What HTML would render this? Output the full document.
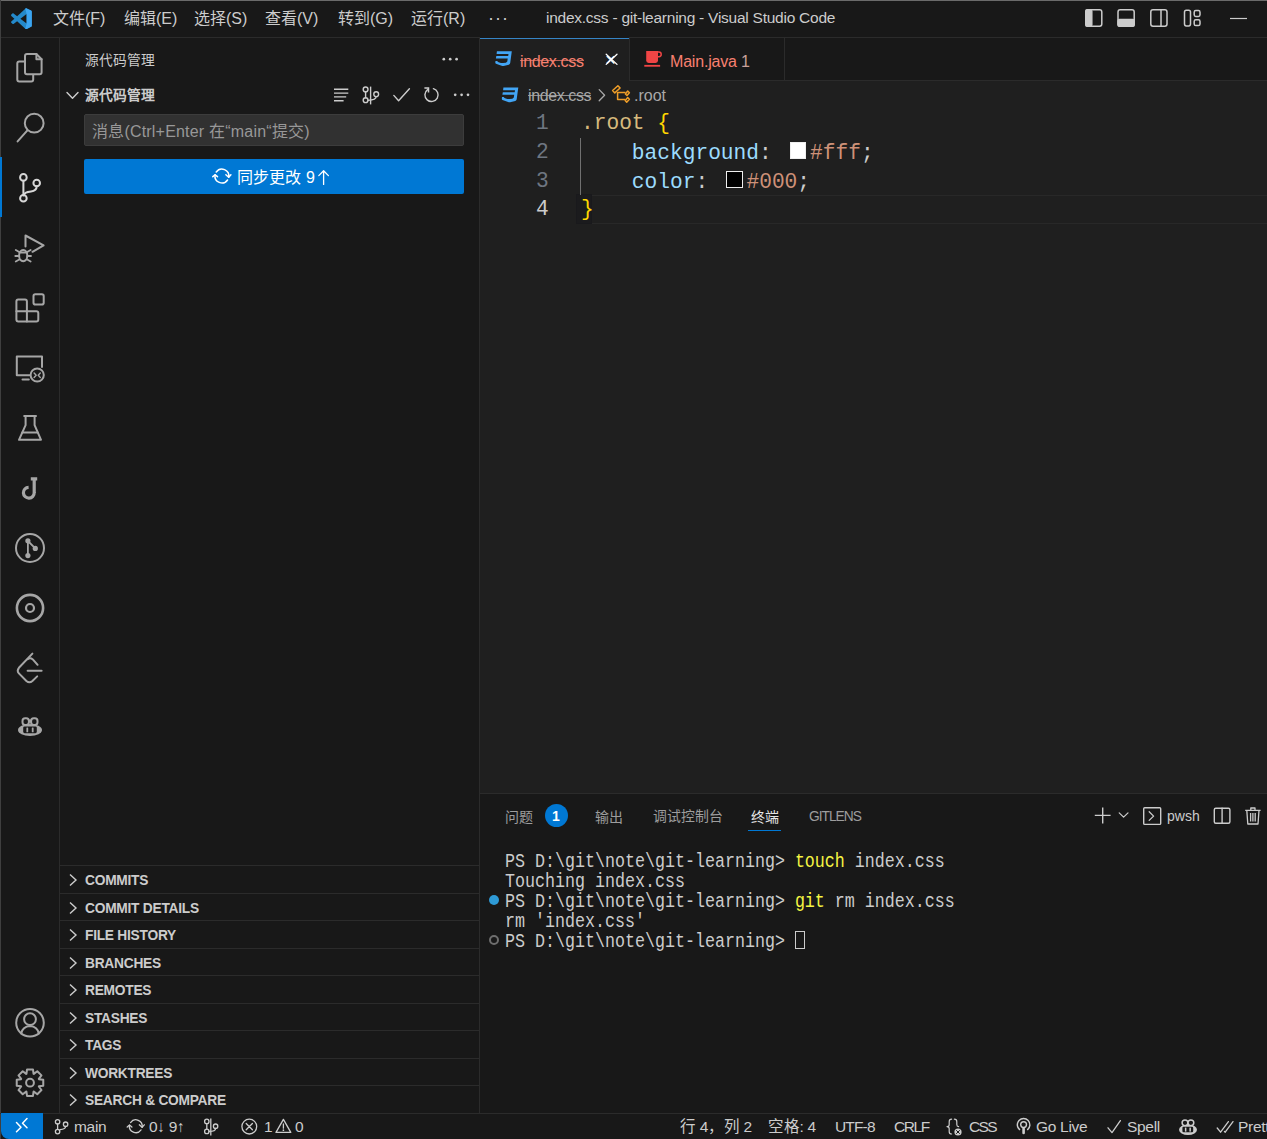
<!DOCTYPE html>
<html lang="zh-CN"><head><meta charset="utf-8">
<style>
*{margin:0;padding:0;box-sizing:border-box}
html,body{width:1267px;height:1139px;overflow:hidden;background:#181818}
body{position:relative;font-family:"Liberation Sans",sans-serif;color:#cccccc}
.a{position:absolute}
.t{position:absolute;white-space:nowrap;line-height:1}
.mono{font-family:"Liberation Mono",monospace}
#term .t{transform:scaleY(1.17);transform-origin:0 0}
svg{position:absolute;overflow:visible}
</style></head><body>

<!-- window edges -->
<div class="a" style="left:0;top:0;width:1267px;height:1px;background:#6a6a6a"></div>
<div class="a" style="left:0;top:0;width:1px;height:1139px;background:#3f3f3f"></div>

<!-- TITLE BAR -->
<div class="a" style="left:1px;top:1px;width:1266px;height:36px;background:#181818"></div>
<div class="a" style="left:1px;top:37px;width:479px;height:1px;background:#2b2b2b"></div>
<div class="a" style="left:629px;top:37px;width:638px;height:1px;background:#2b2b2b"></div>
<div class="a" id="menu" style="left:0;top:0;width:1267px;height:37px;font-size:16px;color:#cccccc">
  <span class="t" style="left:53px;top:11px">文件(F)</span>
  <span class="t" style="left:124px;top:11px">编辑(E)</span>
  <span class="t" style="left:194px;top:11px">选择(S)</span>
  <span class="t" style="left:265px;top:11px">查看(V)</span>
  <span class="t" style="left:338px;top:11px">转到(G)</span>
  <span class="t" style="left:411px;top:11px">运行(R)</span>
  <span class="t" style="left:488px;top:9px;font-size:18px;letter-spacing:1px">···</span>
  <span class="t" style="left:546px;top:10px;font-size:15.5px;letter-spacing:-0.25px">index.css - git-learning - Visual Studio Code</span>
</div>

<!-- ACTIVITY BAR -->
<div class="a" style="left:59px;top:38px;width:1px;height:1075px;background:#2b2b2b"></div>
<div class="a" style="left:0;top:157px;width:2px;height:60px;background:#0078d4"></div>

<!-- SIDEBAR -->
<div class="a" style="left:479px;top:38px;width:1px;height:1075px;background:#2b2b2b"></div>
<span class="t" style="left:85px;top:54px;font-size:13.75px">源代码管理</span>
<span class="t" style="left:85px;top:89px;font-size:13.75px;font-weight:bold">源代码管理</span>
<div class="a" style="left:84px;top:114px;width:380px;height:32px;background:#313131;border:1px solid #3c3c3c;border-radius:2px"></div>
<span class="t" style="left:92px;top:124px;font-size:16px;color:#989898;letter-spacing:0.2px">消息(Ctrl+Enter 在“main“提交)</span>
<div class="a" style="left:84px;top:159px;width:380px;height:35px;background:#0078d4;border-radius:2px"></div>
<span class="t" style="left:237px;top:170px;font-size:16px;color:#ffffff">同步更改</span><span class="t" style="left:306px;top:170px;font-size:16px;color:#ffffff">9</span>

<!-- section headers -->
<div id="sections">
<div class="a" style="left:60px;top:865px;width:419px;height:1px;background:#2b2b2b"></div>
<svg style="left:68px;top:873px" width="10" height="14" viewBox="0 0 10 14"><path d="M2 1.5 L8 7 L2 12.5" fill="none" stroke="#cccccc" stroke-width="1.4"/></svg>
<span class="t" style="left:85px;top:874px;font-size:13.75px;font-weight:bold;color:#cccccc;letter-spacing:-0.25px">COMMITS</span>
<div class="a" style="left:60px;top:893px;width:419px;height:1px;background:#2b2b2b"></div>
<svg style="left:68px;top:901px" width="10" height="14" viewBox="0 0 10 14"><path d="M2 1.5 L8 7 L2 12.5" fill="none" stroke="#cccccc" stroke-width="1.4"/></svg>
<span class="t" style="left:85px;top:902px;font-size:13.75px;font-weight:bold;color:#cccccc;letter-spacing:-0.25px">COMMIT DETAILS</span>
<div class="a" style="left:60px;top:920px;width:419px;height:1px;background:#2b2b2b"></div>
<svg style="left:68px;top:928px" width="10" height="14" viewBox="0 0 10 14"><path d="M2 1.5 L8 7 L2 12.5" fill="none" stroke="#cccccc" stroke-width="1.4"/></svg>
<span class="t" style="left:85px;top:929px;font-size:13.75px;font-weight:bold;color:#cccccc;letter-spacing:-0.25px">FILE HISTORY</span>
<div class="a" style="left:60px;top:948px;width:419px;height:1px;background:#2b2b2b"></div>
<svg style="left:68px;top:956px" width="10" height="14" viewBox="0 0 10 14"><path d="M2 1.5 L8 7 L2 12.5" fill="none" stroke="#cccccc" stroke-width="1.4"/></svg>
<span class="t" style="left:85px;top:957px;font-size:13.75px;font-weight:bold;color:#cccccc;letter-spacing:-0.25px">BRANCHES</span>
<div class="a" style="left:60px;top:975px;width:419px;height:1px;background:#2b2b2b"></div>
<svg style="left:68px;top:983px" width="10" height="14" viewBox="0 0 10 14"><path d="M2 1.5 L8 7 L2 12.5" fill="none" stroke="#cccccc" stroke-width="1.4"/></svg>
<span class="t" style="left:85px;top:984px;font-size:13.75px;font-weight:bold;color:#cccccc;letter-spacing:-0.25px">REMOTES</span>
<div class="a" style="left:60px;top:1003px;width:419px;height:1px;background:#2b2b2b"></div>
<svg style="left:68px;top:1011px" width="10" height="14" viewBox="0 0 10 14"><path d="M2 1.5 L8 7 L2 12.5" fill="none" stroke="#cccccc" stroke-width="1.4"/></svg>
<span class="t" style="left:85px;top:1012px;font-size:13.75px;font-weight:bold;color:#cccccc;letter-spacing:-0.25px">STASHES</span>
<div class="a" style="left:60px;top:1030px;width:419px;height:1px;background:#2b2b2b"></div>
<svg style="left:68px;top:1038px" width="10" height="14" viewBox="0 0 10 14"><path d="M2 1.5 L8 7 L2 12.5" fill="none" stroke="#cccccc" stroke-width="1.4"/></svg>
<span class="t" style="left:85px;top:1039px;font-size:13.75px;font-weight:bold;color:#cccccc;letter-spacing:-0.25px">TAGS</span>
<div class="a" style="left:60px;top:1058px;width:419px;height:1px;background:#2b2b2b"></div>
<svg style="left:68px;top:1066px" width="10" height="14" viewBox="0 0 10 14"><path d="M2 1.5 L8 7 L2 12.5" fill="none" stroke="#cccccc" stroke-width="1.4"/></svg>
<span class="t" style="left:85px;top:1067px;font-size:13.75px;font-weight:bold;color:#cccccc;letter-spacing:-0.25px">WORKTREES</span>
<div class="a" style="left:60px;top:1085px;width:419px;height:1px;background:#2b2b2b"></div>
<svg style="left:68px;top:1093px" width="10" height="14" viewBox="0 0 10 14"><path d="M2 1.5 L8 7 L2 12.5" fill="none" stroke="#cccccc" stroke-width="1.4"/></svg>
<span class="t" style="left:85px;top:1094px;font-size:13.75px;font-weight:bold;color:#cccccc;letter-spacing:-0.25px">SEARCH &amp; COMPARE</span>
</div>

<!-- EDITOR -->
<div class="a" style="left:480px;top:38px;width:787px;height:755px;background:#1f1f1f"></div>
<!-- tab bar -->
<div class="a" style="left:480px;top:38px;width:787px;height:43px;background:#181818"></div>
<div class="a" style="left:480px;top:80px;width:787px;height:1px;background:#2b2b2b"></div>
<div class="a" style="left:480px;top:38px;width:149px;height:43px;background:#1f1f1f;border-top:1px solid #3584c6"></div>
<div class="a" style="left:629px;top:38px;width:1px;height:43px;background:#2b2b2b"></div>
<div class="a" style="left:784px;top:38px;width:1px;height:43px;background:#2b2b2b"></div>
<span class="t" style="left:520px;top:53.5px;font-size:16px;color:#f88070;letter-spacing:-0.35px">index.css</span><div class="a" style="left:520px;top:60px;width:64px;height:1px;background:#f88070;opacity:0.7"></div>
<span class="t" style="left:605px;top:50px;font-size:19px;color:#ffffff">×</span>
<span class="t" style="left:670px;top:53.5px;font-size:16px;color:#f88070;letter-spacing:-0.2px">Main.java <span style="color:#c8a09a">1</span></span>
<!-- breadcrumbs -->
<span class="t" style="left:528px;top:88px;font-size:16px;color:#a9a9a9;letter-spacing:-0.4px">index.css</span><div class="a" style="left:528px;top:95px;width:63px;height:1px;background:#a9a9a9;opacity:0.8"></div>
<span class="t" style="left:634px;top:88px;font-size:16px;color:#a9a9a9">.root</span>

<!-- code -->
<div class="a" style="left:576px;top:195px;width:691px;height:29px;border-top:1px solid #282828;border-bottom:1px solid #282828"></div>
<div class="a" style="left:576px;top:194px;width:16px;height:30px;background:#1b1b1d;border:1px solid #19191c"></div>
<div class="a" style="left:580px;top:138px;width:1px;height:57px;background:#707070"></div>
<div id="code" class="mono" style="position:absolute;left:0;top:0;font-size:21.2px">
  <span class="t" style="left:536px;top:113px;color:#6e7681">1</span>
  <span class="t" style="left:536px;top:142px;color:#6e7681">2</span>
  <span class="t" style="left:536px;top:171px;color:#6e7681">3</span>
  <span class="t" style="left:536px;top:199px;color:#cccccc">4</span>
  <span class="t" style="left:581px;top:113px"><span style="color:#d7ba7d">.root</span> <span style="color:#ffd700">{</span></span>
  <span class="t" style="left:581px;top:142px;white-space:pre">    <span style="color:#9cdcfe">background</span><span style="color:#cccccc">: </span><span style="display:inline-block;width:16.5px;height:16.5px;margin:0 3.6px 0 5.5px;border:1.6px solid #eee;background:#fff;vertical-align:0px"></span><span style="color:#ce9178">#fff</span><span style="color:#cccccc">;</span></span>
  <span class="t" style="left:581px;top:171px;white-space:pre">    <span style="color:#9cdcfe">color</span><span style="color:#cccccc">: </span><span style="display:inline-block;width:16.5px;height:16.5px;margin:0 3.6px 0 5.5px;border:1.6px solid #eee;background:#000;vertical-align:0px"></span><span style="color:#ce9178">#000</span><span style="color:#cccccc">;</span></span>
  <span class="t" style="left:581px;top:199px;color:#ffd700">}</span>
</div>

<!-- PANEL -->
<div class="a" style="left:480px;top:793px;width:787px;height:1px;background:#2b2b2b"></div>
<div class="a" style="left:480px;top:794px;width:787px;height:318px;background:#181818"></div>
<span class="t" style="left:505px;top:810px;font-size:14px;color:#9d9d9d">问题</span>
<div class="a" style="left:545px;top:804px;width:23px;height:23px;border-radius:50%;background:#0078d4"></div>
<span class="t" style="left:552px;top:809px;font-size:14px;color:#fff;font-weight:bold">1</span>
<span class="t" style="left:595px;top:810px;font-size:14px;color:#9d9d9d">输出</span>
<span class="t" style="left:653px;top:810px;font-size:13.9px;color:#9d9d9d">调试控制台</span>
<span class="t" style="left:751px;top:810px;font-size:14px;color:#e7e7e7">终端</span>
<div class="a" style="left:748px;top:830px;width:33px;height:1px;background:#0078d4"></div>
<span class="t" style="left:809px;top:810px;font-size:13.75px;color:#9d9d9d;letter-spacing:-1px">GITLENS</span>
<span class="t" style="left:1167px;top:809px;font-size:14px;color:#cccccc">pwsh</span>

<div id="term" class="mono" style="position:absolute;left:0;top:0;font-size:16.67px;color:#cccccc">
  <span class="t" style="left:505px;top:852.5px">PS D:\git\note\git-learning&gt; <span style="color:#f5f543">touch</span> index.css</span>
  <span class="t" style="left:505px;top:872.5px">Touching index.css</span>
  <span class="t" style="left:505px;top:892.5px">PS D:\git\note\git-learning&gt; <span style="color:#f5f543">git</span> rm index.css</span>
  <span class="t" style="left:505px;top:912.5px">rm 'index.css'</span>
  <span class="t" style="left:505px;top:932.5px">PS D:\git\note\git-learning&gt; </span>
</div>
<div class="a" style="left:795px;top:931px;width:10px;height:18px;border:1px solid #cccccc"></div>
<div class="a" style="left:488.5px;top:894.8px;width:10px;height:10px;border-radius:50%;background:#2e9ad6"></div>
<div class="a" style="left:488.5px;top:934.8px;width:10px;height:10px;border-radius:50%;border:2px solid #6e6e6e"></div>

<!-- STATUS BAR -->
<div class="a" style="left:0;top:1113px;width:1267px;height:1px;background:#2b2b2b"></div>
<div class="a" style="left:1px;top:1113px;width:42px;height:26px;background:#0078d4;border-bottom-left-radius:8px"></div>
<div id="status" style="position:absolute;left:0;top:0;font-size:15.5px;color:#cccccc;letter-spacing:-0.3px">
  <span class="t" style="left:74px;top:1119px">main</span>
  <span class="t" style="left:149px;top:1119px">0↓ 9↑</span>
  <span class="t" style="left:264px;top:1119px">1</span>
  <span class="t" style="left:295px;top:1119px">0</span>
  <span class="t" style="left:680px;top:1119px">行 4，列 2</span>
  <span class="t" style="left:768px;top:1119px">空格: 4</span>
  <span class="t" style="left:835px;top:1119px;letter-spacing:-0.85px">UTF-8</span>
  <span class="t" style="left:894px;top:1119px;letter-spacing:-1.4px">CRLF</span>
  <span class="t" style="left:969px;top:1119px;letter-spacing:-1.6px">CSS</span>
  <span class="t" style="left:1036px;top:1119px">Go Live</span>
  <span class="t" style="left:1127px;top:1119px">Spell</span>
  <span class="t" style="left:1238px;top:1119px">Prettier</span>
</div>


<!-- ICON OVERLAY -->
<svg style="left:0;top:0" width="1267" height="1139" viewBox="0 0 1267 1139">
<g fill="none" stroke-linecap="round" stroke-linejoin="round">
<!-- VS Code logo -->
<g transform="translate(11,8.3) scale(0.208)">
<path fill="#2489ca" fill-rule="evenodd" d="M96.5 10.8 L75.9 0.9 C73.5 -0.3 70.7 0.2 68.8 2.1 L29.4 38.1 L12.2 25.1 C10.6 23.9 8.4 24 6.9 25.3 L1.4 30.3 C-0.4 32 -0.4 34.8 1.4 36.5 L16.3 50 L1.4 63.5 C-0.4 65.2 -0.4 68 1.4 69.7 L6.9 74.7 C8.4 76 10.6 76.1 12.2 74.9 L29.4 61.9 L68.8 97.9 C70.7 99.8 73.5 100.3 75.9 99.1 L96.5 89.2 C98.7 88.1 100 85.9 100 83.5 V16.5 C100 14.1 98.6 11.9 96.5 10.8 Z M75 27.3 L45.1 50 L75 72.7 Z"/>
<path fill="#3fa9f5" opacity="0.9" d="M96.5 10.8 L75.9 0.9 C73.5 -0.3 70.7 0.2 68.8 2.1 L75 27.3 V72.7 L68.8 97.9 C70.7 99.8 73.5 100.3 75.9 99.1 L96.5 89.2 C98.7 88.1 100 85.9 100 83.5 V16.5 C100 14.1 98.6 11.9 96.5 10.8 Z"/>
</g>

<!-- title bar right icons -->
<g stroke="#cccccc" stroke-width="1.5">
  <rect x="1085.8" y="9.8" width="16" height="16.4" rx="2.2"/>
  <rect x="1085.8" y="9.8" width="6" height="16.4" rx="1.5" fill="#cccccc"/>
  <rect x="1118" y="9.8" width="16.2" height="16.4" rx="2.2"/>
  <rect x="1118" y="19.5" width="16.2" height="6.7" rx="1.5" fill="#cccccc"/>
  <rect x="1150.8" y="9.8" width="16.2" height="16.4" rx="2.2"/>
  <line x1="1161" y1="10" x2="1161" y2="26"/>
  <rect x="1184.5" y="10.3" width="6" height="15.6" rx="1.8"/>
  <rect x="1194.2" y="10.6" width="5.8" height="5.8" rx="1.6"/>
  <rect x="1194.2" y="19.8" width="5.8" height="5.8" rx="1.6"/>
</g>
<line x1="1230" y1="18.5" x2="1247" y2="18.5" stroke="#cccccc" stroke-width="1.2" stroke-linecap="butt"/>

<!-- ACTIVITY BAR ICONS -->
<g stroke="#a6a6a6" stroke-width="2">
  <!-- files -->
  <path d="M24.5,61.4 H19.3 Q17.3,61.4 17.3,63.4 V79.5 Q17.3,81.5 19.3,81.5 H31.2 Q33.2,81.5 33.2,79.5 V75.2"/>
  <path d="M27,54 H36.4 L41.6,59.2 V72.2 Q41.6,74.2 39.6,74.2 H27 Q25,74.2 25,72.2 V56 Q25,54 27,54 Z"/>
  <path d="M36.4,54 V59.2 H41.6"/>
  <!-- search -->
  <circle cx="34.2" cy="123.2" r="9.4"/>
  <line x1="17.6" y1="141.4" x2="27.4" y2="130.4"/>
  <!-- run & debug -->
  <path d="M25.5,246.5 V235.5 L43.6,245.4 L32.5,251.8"/>
  <ellipse cx="23.2" cy="255.6" rx="4.1" ry="5.6"/>
  <path d="M19.5,252.5 H27 M15.8,250 L19.2,252 M30.6,250 L27.2,252 M15.3,256 H19 M31,256 H27.4 M15.8,261.5 L19.3,259.5 M30.6,261.5 L27.2,259.5" stroke-width="1.8"/>
  <!-- extensions -->
  <rect x="33.5" y="294.2" width="10.2" height="10.3" rx="1.8"/>
  <path d="M18.2,299.5 H25 Q26.9,299.5 26.9,301.4 V311.3 H36.4 Q38.3,311.3 38.3,313.2 V319.5 Q38.3,321.4 36.4,321.4 H18.3 Q16.4,321.4 16.4,319.5 V301.4 Q16.4,299.5 18.2,299.5 Z"/>
  <path d="M16.4,311.3 H26.9 V321.4"/>
  <!-- remote explorer -->
  <path d="M29.5,375.2 H16.8 V356.5 H42 V367"/>
  <line x1="22.5" y1="379.6" x2="28.8" y2="379.6"/>
  <circle cx="37.2" cy="375" r="6.6"/>
  <path d="M34.1,373.1 L36.2,375.3 L34.1,377.5 M40.3,373.1 L38.2,375.3 L40.3,377.5" stroke-width="1.4"/>
  <!-- testing flask -->
  <path d="M24.2,416 H36"/>
  <path d="M25.6,416.5 V425.2 L19,439.8 H41 L34.6,425.2 V416.5"/>
  <line x1="22.3" y1="432.6" x2="37.7" y2="432.6"/>
  <!-- J -->
  <path d="M30.8,478.8 H37.2 M34.2,479 V492.4 A5.4,5.4 0 1 1 28.6,487.3" stroke-width="3.2" stroke-linecap="butt"/>
  <!-- gitlens -->
  <circle cx="30" cy="548" r="14"/>
  <path d="M27.9,541 V555.5 M27.9,541 L35.3,548.4" stroke-width="1.8"/>
  <circle cx="27.9" cy="540.8" r="2.6" fill="#a6a6a6" stroke="none"/>
  <circle cx="27.9" cy="555.6" r="2.6" fill="#a6a6a6" stroke="none"/>
  <circle cx="35.3" cy="548.4" r="2.6" fill="#a6a6a6" stroke="none"/>
  <!-- circle dot -->
  <circle cx="30" cy="608" r="13.1" stroke-width="2.6"/>
  <circle cx="30" cy="608" r="4" stroke-width="2.2"/>
  <!-- leetcode -->
  <path d="M32.4,653.6 L18.9,667.8 Q16.6,670.6 18.9,673.4 L26.4,681 Q29.4,683.6 32.4,681 L37.2,676.4"/>
  <path d="M27.6,659.2 Q30.2,657.2 32.8,659.4 L37.6,664.8"/>
  <line x1="27.6" y1="670.8" x2="41.6" y2="670.8"/>
  <!-- account -->
  <circle cx="30" cy="1022.7" r="13.8"/>
  <circle cx="30" cy="1019.2" r="5.9"/>
  <path d="M21.2,1033.6 Q22.5,1026.5 30,1026 Q37.5,1026.5 38.8,1033.6"/>
</g>
<!-- copilot -->
<ellipse cx="30" cy="730" rx="12" ry="5.9" fill="#a6a6a6"/>
<rect x="22.5" y="718.3" width="6.4" height="6.6" rx="2.6" fill="#181818" stroke="#a6a6a6" stroke-width="2"/>
<rect x="31.1" y="718.3" width="6.4" height="6.6" rx="2.6" fill="#181818" stroke="#a6a6a6" stroke-width="2"/>
<rect x="28.6" y="719.6" width="2.8" height="3" fill="#a6a6a6"/>
<rect x="23.2" y="726.4" width="13.6" height="6.8" rx="1.4" fill="#181818"/>
<rect x="26.4" y="727.6" width="1.8" height="4.6" rx="0.5" fill="#a6a6a6"/>
<rect x="31.8" y="727.6" width="1.8" height="4.6" rx="0.5" fill="#a6a6a6"/>
<!-- settings gear -->
<g transform="translate(30,1082.7)" stroke="#a6a6a6" stroke-width="2" fill="none">
  <path d="M-3.56,-8.92 L-2.97,-13.27 L2.97,-13.27 L3.56,-8.92 L3.79,-8.82 L7.29,-11.48 L11.48,-7.29 L8.82,-3.79 L8.92,-3.56 L13.27,-2.97 L13.27,2.97 L8.92,3.56 L8.82,3.79 L11.48,7.29 L7.29,11.48 L3.79,8.82 L3.56,8.92 L2.97,13.27 L-2.97,13.27 L-3.56,8.92 L-3.79,8.82 L-7.29,11.48 L-11.48,7.29 L-8.82,3.79 L-8.92,3.56 L-13.27,2.97 L-13.27,-2.97 L-8.92,-3.56 L-8.82,-3.79 L-11.48,-7.29 L-7.29,-11.48 L-3.79,-8.82 Z"/>
  <circle cx="0" cy="0" r="3.9"/>
</g>
<!-- SCM active -->
<g stroke="#d7d7d7" stroke-width="2">
  <circle cx="23.4" cy="177.4" r="3.3"/>
  <circle cx="36.7" cy="183" r="3.3"/>
  <circle cx="23.4" cy="198.3" r="3.3"/>
  <line x1="23.4" y1="180.7" x2="23.4" y2="195"/>
  <path d="M36.7,186.3 Q36.7,190.8 31,191.4 Q24.2,192 23.6,195.5"/>
</g>
</g>
</svg>


<!-- ICON OVERLAY 2 -->
<svg style="left:0;top:0" width="1267" height="1139" viewBox="0 0 1267 1139">
<g fill="none" stroke-linecap="round" stroke-linejoin="round">
<!-- sidebar header dots -->
<g fill="#cccccc">
  <circle cx="443.8" cy="59.2" r="1.35"/><circle cx="450.2" cy="59.2" r="1.35"/><circle cx="456.6" cy="59.2" r="1.35"/>
  <circle cx="455.2" cy="94.8" r="1.35"/><circle cx="461.6" cy="94.8" r="1.35"/><circle cx="468" cy="94.8" r="1.35"/>
</g>
<!-- chevron down for section -->
<path d="M67,92.5 L72.5,98.2 L78,92.5" stroke="#cccccc" stroke-width="1.4"/>
<g stroke="#cccccc" stroke-width="1.4">
  <!-- list -->
  <path d="M334,89.2 H348.3 M334,93.1 H348.3 M334,96.9 H346.2 M334,100.7 H343.6" stroke-linecap="butt"/>
  <!-- graph -->
  <line x1="370.6" y1="86.6" x2="370.6" y2="104.4" stroke-linecap="butt"/>
  <circle cx="365.6" cy="89.4" r="2.4"/>
  <circle cx="365.6" cy="100.2" r="2.4"/>
  <circle cx="376.2" cy="94.2" r="2.4"/>
  <path d="M365.6,91.8 V97.8 M376.2,96.6 Q376.2,100 368,100.4"/>
  <!-- check -->
  <path d="M393.8,95.4 L398.6,100.8 L409.4,88.8"/>
  <!-- refresh -->
  <path d="M433.4,88.6 A6.6,6.6 0 1 1 427.6,89.6"/>
  <path d="M424.4,88.1 H428.5 V92.4" stroke-linecap="butt" stroke-linejoin="miter" stroke-width="1.5"/>
</g>
<!-- button sync icon -->
<g stroke="#ffffff" stroke-width="1.5" fill="none" stroke-linecap="round" stroke-linejoin="round"><path d="M216.25,172.04 A6.9,6.9 0 0 1 228.70,177.20"/><path d="M227.55,179.96 A6.9,6.9 0 0 1 215.10,174.80"/><path d="M225.90,174.70 L228.70,177.20 L230.90,174.70"/><path d="M212.80,176.70 L215.10,174.80 L217.50,176.70"/></g>
<path d="M323.6,171 V184.4 M318.8,175.6 L323.6,170.8 L328.4,175.6" stroke="#ffffff" stroke-width="1.3" fill="none"/>

<!-- TAB ICONS -->
<!-- css3 icon -->
<g id="cssicon" transform="translate(495,50.6)">
  <path fill="#42a5f5" d="M1.9,0.6 H16.8 L15.2,12.4 Q15,13.6 13.8,14.1 L8.6,15.4 Q8,15.6 7.3,15.4 L1,13.2 Q0.2,12.9 0.3,12 L0.5,10.3 L2.2,10.3 Q3.5,12.3 8,12.3 Q11.6,12.3 12.3,10.8 L12.7,8 H0.9 L1.3,5.5 H13.2 L13.5,3.5 H1.6 Z"/>
</g>
<g transform="translate(501.5,86.8)">
  <path fill="#42a5f5" d="M1.9,0.6 H16.8 L15.2,12.4 Q15,13.6 13.8,14.1 L8.6,15.4 Q8,15.6 7.3,15.4 L1,13.2 Q0.2,12.9 0.3,12 L0.5,10.3 L2.2,10.3 Q3.5,12.3 8,12.3 Q11.6,12.3 12.3,10.8 L12.7,8 H0.9 L1.3,5.5 H13.2 L13.5,3.5 H1.6 Z"/>
</g>
<!-- close -->
<path d="M606.2,54.2 L617,64.4 M617,54.2 L606.2,64.4" stroke="#ffffff" stroke-width="1.3"/>
<!-- java icon -->
<g fill="#f04545">
  <path d="M646.2,51.1 H658 V60.6 Q658,63 655.6,63 H648.6 Q646.2,63 646.2,60.6 Z"/>
  <rect x="644.3" y="64.9" width="15.8" height="1.8"/>
</g>
<path d="M657.4,51.9 H659 Q661.2,51.9 661.2,54.3 Q661.2,56.7 659,56.7 H657.4" fill="none" stroke="#f04545" stroke-width="1.5"/>
<!-- breadcrumb chevron -->
<path d="M599.2,89.6 L604.6,95.2 L599.2,100.8" stroke="#a9a9a9" stroke-width="1.3"/>
<!-- symbol class icon -->
<g stroke="#ee9d28" stroke-width="1.5" stroke-linejoin="round" stroke-linecap="butt" fill="none">
  <path d="M612.6,90.5 L617.9,85.7 L620.1,88 L614.8,92.9 Z"/>
  <path d="M617.6,92 V99.4 H625.3 M617.6,92.6 H625.6"/>
  <path d="M625.4,94 L627.7,91 L629.4,92.7 L627,95.5 Z"/>
  <path d="M625.2,100.4 L627.7,97.6 L629.4,99.2 L626.7,102.2 Z"/>
</g>

<!-- PANEL ICONS -->
<g stroke="#cccccc" stroke-width="1.4">
  <path d="M1102.7,807.5 V823.4 M1094.8,815.4 H1110.6" stroke-linecap="butt"/>
  <path d="M1119.2,812.8 L1123.6,817.2 L1128,812.8" stroke-width="1.2"/>
  <rect x="1143.7" y="807.8" width="17" height="16.6" rx="1"/>
  <path d="M1149.2,811.8 L1153.6,816.1 L1149.2,820.4" stroke-width="1.3"/>
  <rect x="1214.3" y="808.2" width="15.6" height="15" rx="1.5"/>
  <line x1="1222.1" y1="808.2" x2="1222.1" y2="823.2"/>
  <path d="M1245.2,810.4 H1260.6 M1250.8,810.4 V808 H1255 V810.4 M1246.8,810.4 L1247.8,824 H1258 L1259,810.4 M1250.6,813 V821.4 M1252.9,813 V821.4 M1255.2,813 V821.4" stroke-width="1.3" stroke-linecap="butt"/>
</g>

<!-- STATUS BAR ICONS -->
<g stroke="#cccccc" stroke-width="1.3" fill="none" stroke-linecap="round" stroke-linejoin="round"><path d="M130.56,1122.53 A6.4,6.4 0 0 1 142.10,1127.31"/><path d="M141.04,1129.87 A6.4,6.4 0 0 1 129.50,1125.09"/><path d="M139.30,1124.81 L142.10,1127.31 L144.30,1124.81"/><path d="M127.20,1126.99 L129.50,1125.09 L131.90,1126.99"/></g>
<!-- remote -->
<path d="M16.5,1122.6 L21,1127.2 L16.5,1131.8 M27,1118.6 L22.5,1123.2 L27,1127.8" stroke="#ffffff" stroke-width="1.5"/>
<g stroke="#cccccc" stroke-width="1.3">
  <!-- branch -->
  <circle cx="57.6" cy="1121.8" r="2.2"/>
  <circle cx="57.6" cy="1131.6" r="2.2"/>
  <circle cx="65.6" cy="1124.2" r="2.2"/>
  <path d="M57.6,1124 V1129.4 M65.6,1126.4 Q65.6,1129 60,1129.6"/>
  <!-- sync -->

  <!-- graph -->
  <line x1="210.8" y1="1118.4" x2="210.8" y2="1135.4" stroke-linecap="butt"/>
  <circle cx="206.8" cy="1121.4" r="2.2"/>
  <circle cx="206.8" cy="1131.4" r="2.2"/>
  <circle cx="215.6" cy="1126.2" r="2.2"/>
  <path d="M206.8,1123.6 V1129.2 M215.6,1128.4 Q215.6,1131.2 209,1131.4"/>
  <!-- error -->
  <circle cx="249.3" cy="1126.6" r="7.4"/>
  <path d="M246.2,1123.5 L252.4,1129.7 M252.4,1123.5 L246.2,1129.7"/>
  <!-- warning -->
  <path d="M283.4,1119.4 L290.8,1132.4 H276 Z" stroke-linejoin="round"/>
  <path d="M283.4,1124 V1128.2" />
  <!-- braces -->
  <path d="M951.6,1119.2 Q949.2,1119.2 949.2,1121.8 V1124.4 Q949.2,1126.6 947,1126.6 Q949.2,1126.6 949.2,1128.8 V1131.4 Q949.2,1134 951.6,1134" stroke-width="1.2"/>
  <path d="M954.4,1119.2 Q956.8,1119.2 956.8,1121.8 V1124.4 Q956.8,1126.4 958.6,1126.6" stroke-width="1.2"/>
  <!-- go live -->
  <path d="M1019.6,1129.6 A6.3,6.3 0 1 1 1027.6,1129.6" stroke-width="1.4"/>
  <circle cx="1023.6" cy="1124.6" r="2.9" stroke-width="1.4"/>
  <path d="M1023.6,1128.4 V1133" stroke-width="2.6" stroke-linecap="round"/>
  <!-- check -->
  <path d="M1108,1127.8 L1112,1132.6 L1120.4,1120.6"/>
  <!-- double check -->
  <path d="M1217.2,1128 L1220.6,1132.2 L1228.4,1121.6 M1224.4,1131.4 L1225.2,1132.2 L1233,1121.6"/>
</g>
<circle cx="958" cy="1132" r="3.6" fill="#cccccc"/>
<path d="M956.5,1130.5 L959.5,1133.5 M959.5,1130.5 L956.5,1133.5" stroke="#181818" stroke-width="1"/>

<circle cx="283.4" cy="1130.2" r="0.85" fill="#cccccc"/>
<!-- status copilot -->
<ellipse cx="1188" cy="1129.8" rx="9" ry="5.2" fill="#cccccc"/>
<circle cx="1185" cy="1122.8" r="2.9" fill="#181818" stroke="#cccccc" stroke-width="1.5"/>
<circle cx="1190.9" cy="1122.8" r="2.9" fill="#181818" stroke="#cccccc" stroke-width="1.5"/>
<rect x="1182.4" y="1126.8" width="10.8" height="5.4" rx="1.2" fill="#181818"/>
<rect x="1184.9" y="1127.6" width="1.5" height="4" fill="#cccccc"/>
<rect x="1189.4" y="1127.6" width="1.5" height="4" fill="#cccccc"/>
</g>
</svg>

</body></html>
